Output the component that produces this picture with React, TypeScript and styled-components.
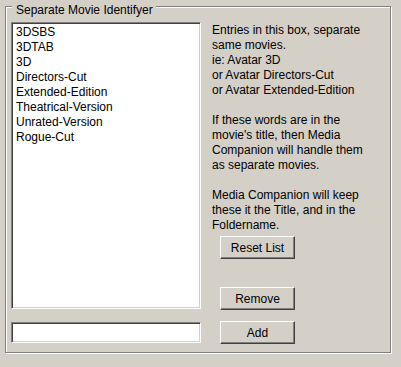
import React from "react"
import styled, { createGlobalStyle } from "styled-components"

const entries = [
  "3DSBS",
  "3DTAB",
  "3D",
  "Directors-Cut",
  "Extended-Edition",
  "Theatrical-Version",
  "Unrated-Version",
  "Rogue-Cut"
]

const helpLines = [
  "Entries in this box, separate",
  "same movies.",
  "ie: Avatar 3D",
  "or Avatar Directors-Cut",
  "or Avatar Extended-Edition",
  "",
  "If these words are in the",
  "movie's title, then Media",
  "Companion will handle them",
  "as separate movies.",
  "",
  "Media Companion will keep",
  "these it the Title, and in the",
  "Foldername."
]

export default function App() {
  return (
    <>
      <GlobalStyle />
      <Page>
        <GroupBox>
          <Legend>Separate Movie Identifyer</Legend>
          <Body>
            <ListBox>
              {entries.map(entry => (
                <ListItem key={entry}>{entry}</ListItem>
              ))}
            </ListBox>
            <Side>
              <Help>
                {helpLines.map((line, i) => (
                  <HelpLine key={i}>{line || "\u00a0"}</HelpLine>
                ))}
              </Help>
              <Button $top={3}>Reset List</Button>
              <Button $push>Remove</Button>
            </Side>
            <TextBox />
            <Button>Add</Button>
          </Body>
        </GroupBox>
      </Page>
    </>
  )
}

const GlobalStyle = createGlobalStyle`
  html, body {
    margin: 0;
    padding: 0;
    background: #d4d0c8;
  }
  body {
    font-family: "Liberation Sans", Arial, sans-serif;
    font-size: 12px;
    color: #000;
  }
`

const Page = styled.div`
  width: 401px;
  height: 367px;
  padding: 6px 0 0 5px;
  box-sizing: border-box;
  background: #d4d0c8;
`

const GroupBox = styled.div`
  display: flex;
  flex-direction: column;
  width: 386px;
  height: 347px;
  box-sizing: border-box;
  border: 1px solid #808080;
  box-shadow: 1px 1px 0 #fff, inset 1px 1px 0 #fff;
`

const Legend = styled.div`
  align-self: flex-start;
  margin: -4px 0 0 6px;
  padding: 0 3px 0 4px;
  line-height: 14px;
  background: #d4d0c8;
`

const Body = styled.div`
  display: grid;
  grid-template-columns: 190px 1fr;
  grid-template-rows: 288px 23px;
  column-gap: 11px;
  row-gap: 11px;
  padding: 5px 0 0 5px;
`

const ListBox = styled.div`
  box-sizing: border-box;
  height: 287px;
  padding: 2px 2px;
  background: #fff;
  border-top: 1px solid #808080;
  border-left: 1px solid #808080;
  border-bottom: 1px solid #fff;
  border-right: 1px solid #fff;
  box-shadow: inset 1px 1px 0 #404040, inset -1px -1px 0 #d4d0c8;
`

const ListItem = styled.div`
  height: 15px;
  line-height: 15px;
  padding-left: 2px;
  white-space: nowrap;
`

const Side = styled.div`
  display: flex;
  flex-direction: column;
  align-items: flex-start;
  padding-top: 1px;
`

const Help = styled.div`
  line-height: 15px;
`

const HelpLine = styled.div`
  white-space: nowrap;
`

const Button = styled.button<{ $top?: number; $push?: boolean }>`
  width: 75px;
  height: 23px;
  margin: ${p => (p.$push ? "auto" : `${p.$top ?? 0}px`)} 0 0 8px;
  padding: 0;
  font-family: "Liberation Sans", Arial, sans-serif;
  font-size: 12px;
  color: #000;
  background: #d4d0c8;
  border-top: 1px solid #fff;
  border-left: 1px solid #fff;
  border-bottom: 1px solid #404040;
  border-right: 1px solid #404040;
  box-shadow: inset -1px -1px 0 #808080;
  cursor: default;
`

const TextBox = styled.input`
  align-self: center;
  box-sizing: border-box;
  width: 190px;
  height: 21px;
  padding: 0 3px;
  font-family: "Liberation Sans", Arial, sans-serif;
  font-size: 12px;
  background: #fff;
  outline: none;
  border-top: 1px solid #808080;
  border-left: 1px solid #808080;
  border-bottom: 1px solid #fff;
  border-right: 1px solid #fff;
  box-shadow: inset 1px 1px 0 #404040, inset -1px -1px 0 #d4d0c8;
`
